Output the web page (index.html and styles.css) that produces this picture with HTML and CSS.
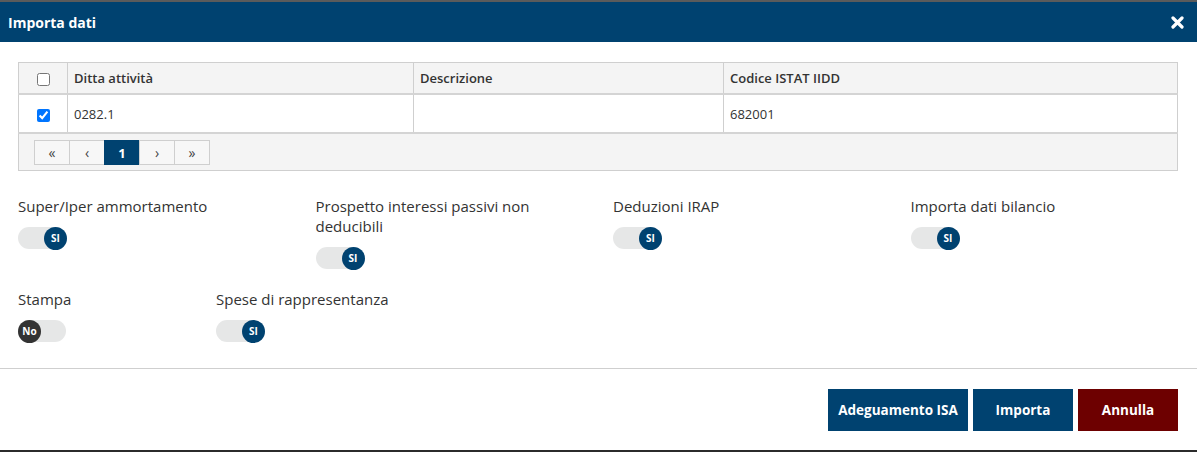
FILE: index.html
```html
<!DOCTYPE html>
<html lang="it">
<head>
  <meta charset="UTF-8">
  <title>Importa dati</title>
  <link rel="stylesheet" href="styles.css">
</head>
<body>
  <div class="backdrop-strip"></div>

  <div class="modal">
    <div class="modal-header">
      <span class="modal-title">Importa dati</span>
      <svg class="close" width="13" height="13" viewBox="0 0 13 13">
        <path d="M2 2 L11 11 M11 2 L2 11" stroke="#fff" stroke-width="3.2" stroke-linecap="round"/>
      </svg>
    </div>

    <div class="modal-body">
      <table class="grid">
        <thead>
          <tr>
            <th class="col-check"><input type="checkbox"></th>
            <th class="col-ditta">Ditta attività</th>
            <th class="col-desc">Descrizione</th>
            <th>Codice ISTAT IIDD</th>
          </tr>
        </thead>
        <tbody>
          <tr>
            <td class="col-check"><input type="checkbox" checked></td>
            <td>0282.1</td>
            <td></td>
            <td>682001</td>
          </tr>
        </tbody>
        <tfoot>
          <tr>
            <td colspan="4">
              <div class="pager">
                <span class="page-btn">&laquo;</span>
                <span class="page-btn">&lsaquo;</span>
                <span class="page-btn active">1</span>
                <span class="page-btn">&rsaquo;</span>
                <span class="page-btn">&raquo;</span>
              </div>
            </td>
          </tr>
        </tfoot>
      </table>

      <div class="options options-4">
        <div class="option">
          <label>Super/Iper ammortamento</label>
          <span class="toggle on"><span class="knob">SI</span></span>
        </div>
        <div class="option">
          <label>Prospetto interessi passivi non deducibili</label>
          <span class="toggle on"><span class="knob">SI</span></span>
        </div>
        <div class="option">
          <label>Deduzioni IRAP</label>
          <span class="toggle on"><span class="knob">SI</span></span>
        </div>
        <div class="option">
          <label>Importa dati bilancio</label>
          <span class="toggle on"><span class="knob">SI</span></span>
        </div>
      </div>

      <div class="options options-6">
        <div class="option">
          <label>Stampa</label>
          <span class="toggle off"><span class="knob">No</span></span>
        </div>
        <div class="option option-wide">
          <label>Spese di rappresentanza</label>
          <span class="toggle on"><span class="knob">SI</span></span>
        </div>
      </div>
    </div>

    <div class="modal-footer">
      <button class="btn btn-primary">Adeguamento ISA</button>
      <button class="btn btn-primary btn-small">Importa</button>
      <button class="btn btn-danger btn-small">Annulla</button>
    </div>
  </div>
</body>
</html>
```

FILE: styles.css
```css
body {
  margin: 0;
  padding: 0;
  font-family: "Open Sans", "Lato", sans-serif;
  color: #333;
  background-color: #fff;
  width: 1197px;
  height: 452px;
  overflow: hidden;
}

.backdrop-strip {
  height: 2px;
  background-color: #5b5b5b;
}

.modal {
  background: #fff;
  border-bottom: 2px solid #2b2b2b;
}

.modal-header {
  background-color: #004270;
  color: white;
  height: 40px;
  padding: 0 13px 0 8px;
  display: flex;
  align-items: center;
  justify-content: space-between;
}

.modal-title {
  font-weight: bold;
  font-size: 14px;
}

.close {
  margin-top: 1px;
}

.modal-body {
  padding: 20px 19px 0 18px;
}

/* tabella */
.grid {
  width: 100%;
  border-collapse: collapse;
  border: 1px solid #cfcfcf;
  font-size: 13px;
}

.grid th,
.grid td {
  border-left: 1px solid #cfcfcf;
  text-align: left;
  padding: 0 6px;
}

.grid th {
  background-color: #f4f4f4;
  height: 30px;
  font-weight: 600;
  border-bottom: 2px solid #d4d4d4;
}

.grid tbody td {
  height: 37px;
  border-bottom: 2px solid #d4d4d4;
}

.grid .col-check {
  width: 48px;
  text-align: center;
  padding: 0;
}

.grid .col-check input {
  margin: 0;
  width: 13px;
  height: 13px;
  vertical-align: middle;
}

.col-ditta {
  width: 333px;
}

.col-desc {
  width: 297px;
}

.grid tfoot td {
  background-color: #f4f4f4;
  padding: 6px 15px 5px;
  height: 25px;
}

.pager {
  display: flex;
}

.page-btn {
  width: 34px;
  height: 23px;
  border: 1px solid #cfcfcf;
  margin-left: -1px;
  display: flex;
  align-items: center;
  justify-content: center;
  font-size: 14px;
  color: #444;
  background-color: #f7f7f7;
}

.page-btn:first-child {
  margin-left: 0;
}

.page-btn.active {
  background-color: #004270;
  border-color: #004270;
  color: white;
  font-weight: bold;
  font-size: 13px;
}

/* opzioni */
.options {
  display: grid;
  font-size: 15px;
  line-height: 20px;
}

.options-4 {
  grid-template-columns: repeat(4, 297.5px);
  margin-top: 25px;
}

.options-6 {
  grid-template-columns: repeat(6, 198px);
  margin-top: 20px;
  padding-bottom: 26px;
}

.option {
  display: flex;
  flex-direction: column;
  align-items: flex-start;
  padding-right: 60px;
}

.option-wide {
  grid-column: span 2;
}

.option label {
  display: block;
  margin-bottom: 11px;
}

.toggle {
  width: 48px;
  height: 22px;
  border-radius: 11px;
  background-color: #e6e7e7;
  display: flex;
  align-items: center;
  position: relative;
}

.toggle .knob {
  width: 23px;
  height: 23px;
  border-radius: 50%;
  color: white;
  font-size: 10px;
  font-weight: bold;
  display: flex;
  align-items: center;
  justify-content: center;
  line-height: 1;
}

.toggle.on {
  justify-content: flex-end;
}

.toggle.on .knob {
  background-color: #004270;
  margin-right: -1px;
}

.toggle.off .knob {
  background-color: #333;
}

.modal-footer {
  border-top: 1px solid #cfcfcf;
  padding: 20px 19px 19px;
  display: flex;
  justify-content: flex-end;
  gap: 5px;
}

.btn {
  height: 42px;
  border: none;
  color: white;
  font-family: inherit;
  font-weight: bold;
  font-size: 13.5px;
  padding: 0 10px;
  min-width: 140px;
}

.btn-small {
  min-width: 100px;
}

.btn-primary {
  background-color: #004270;
}

.btn-danger {
  background-color: #6d0000;
}
```
